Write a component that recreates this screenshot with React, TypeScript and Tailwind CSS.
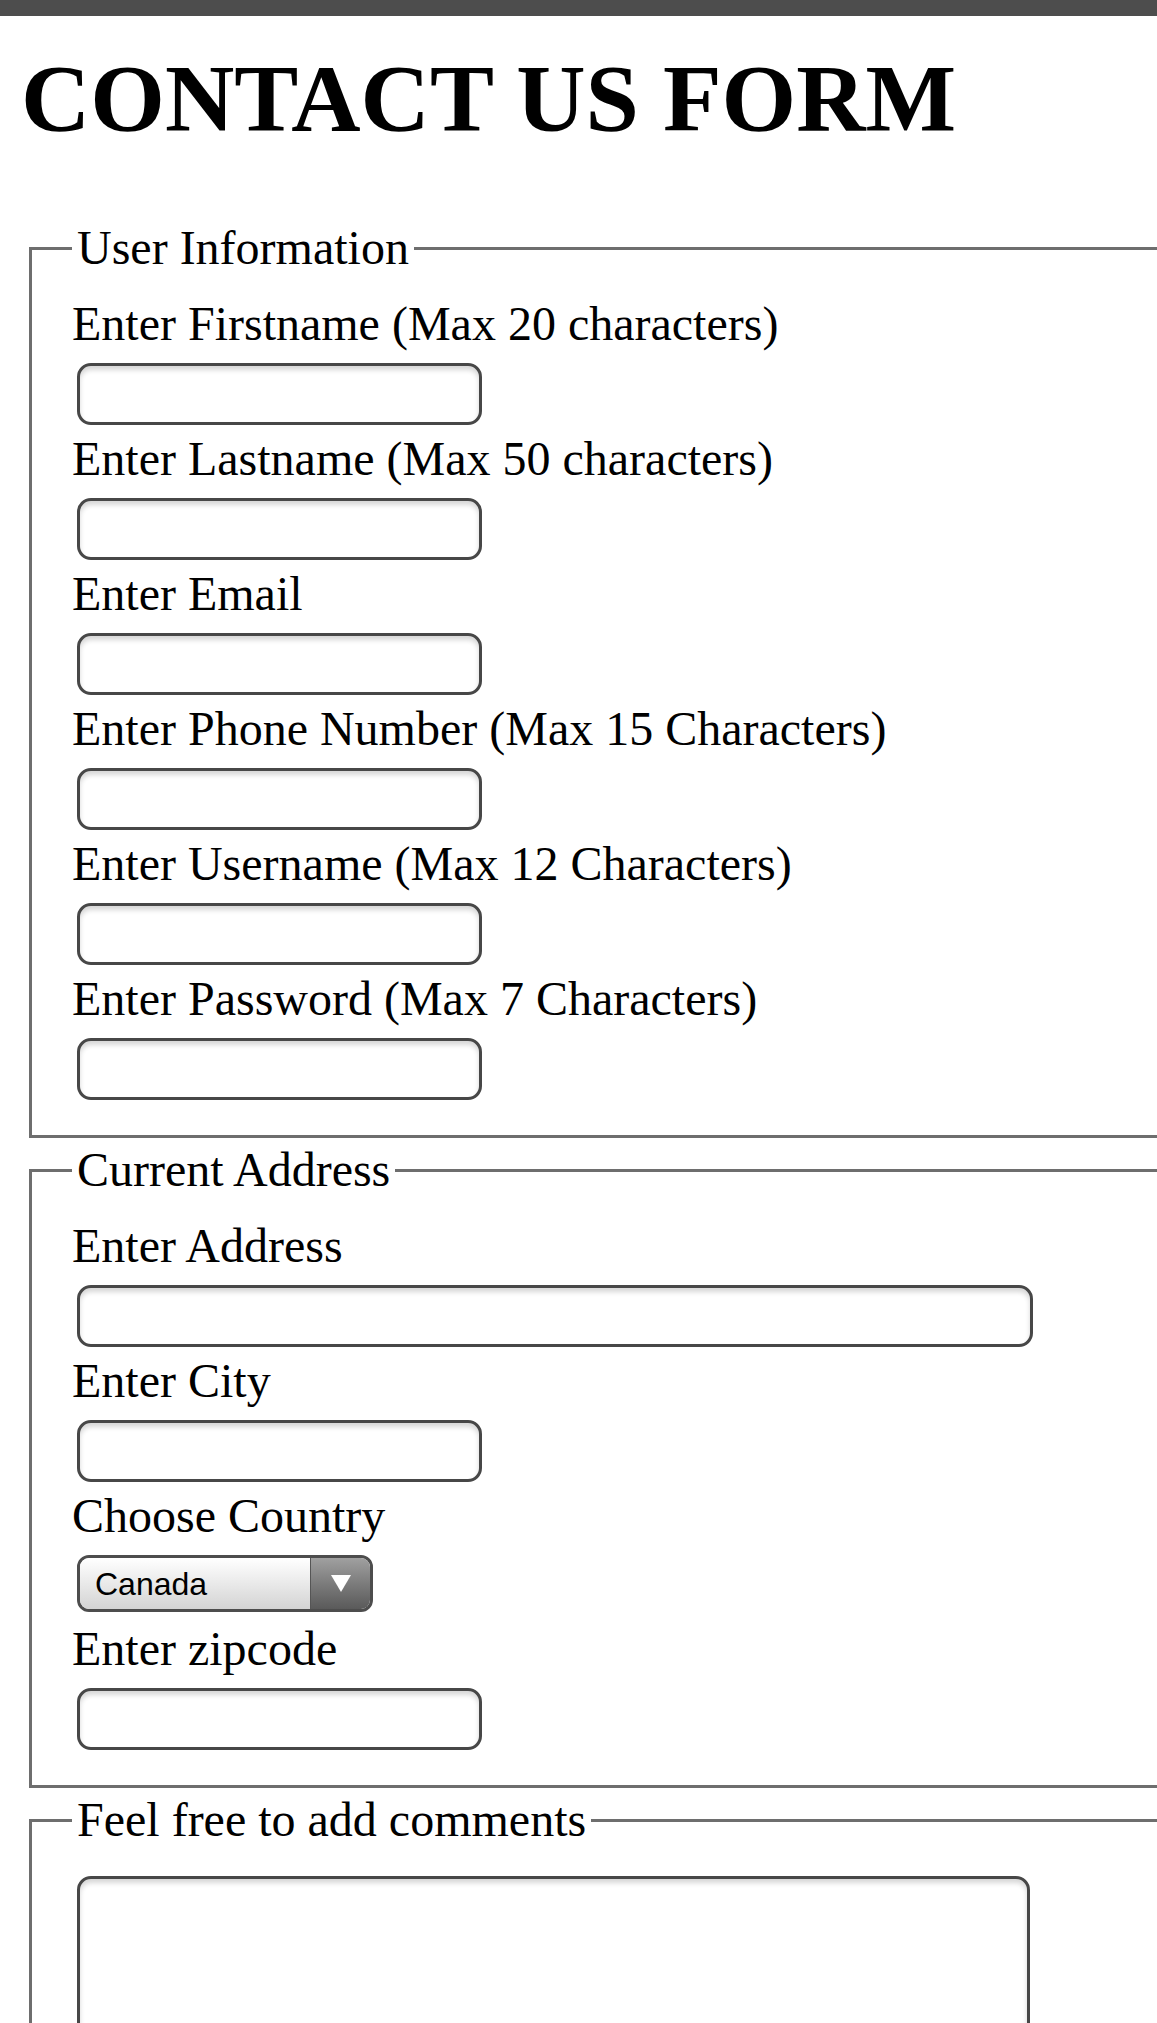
import React from 'react'

const userFields = [
  'Enter Firstname (Max 20 characters)',
  'Enter Lastname (Max 50 characters)',
  'Enter Email',
  'Enter Phone Number (Max 15 Characters)',
  'Enter Username (Max 12 Characters)',
  'Enter Password (Max 7 Characters)',
]

const inputClass =
  "ml-[5px] mt-[15px] h-[62px] rounded-[14px] border-[3px] border-[#474747] bg-white shadow-[inset_0_4px_5px_rgba(0,0,0,0.16)] outline-none"

function Field({ label, wide }: { label: string; wide?: boolean }) {
  return (
    <div className="flex flex-col items-start pb-[10px]">
      <label className="block leading-[48px]">{label}</label>
      <input type="text" className={`${inputClass} ${wide ? 'w-[956px]' : 'w-[405px]'}`} />
    </div>
  )
}

function Box({ title, top, children }: { title: string; top: string; children: React.ReactNode }) {
  return (
    <fieldset className={`ml-[29px] w-[1200px] border-[3px] border-[#6e6e6e] pl-[40px] pb-[25px] ${top}`}>
      <legend className="px-[5px] leading-[48px]">{title}</legend>
      {children}
    </fieldset>
  )
}

export default function App() {
  return (
    <div className="min-h-screen w-full overflow-hidden bg-white text-[48px] text-black font-['Liberation_Serif','Times_New_Roman',serif]">
      <div className="h-[16px] bg-[#4d4d4d]" />
      <h1 className="mt-[35px] pl-[21px] text-[96px] font-bold leading-[96px]">CONTACT US FORM</h1>

      <form className="mt-[77px] pb-[40px]">
        <Box title="User Information" top="">
          <div className="pt-[28px]">
            {userFields.map((f) => (
              <Field key={f} label={f} />
            ))}
          </div>
        </Box>

        <Box title="Current Address" top="mt-[8px]">
          <div className="pt-[28px]">
            <Field label="Enter Address" wide />
            <Field label="Enter City" />
            <div className="flex flex-col items-start">
              <label className="block leading-[48px]">Choose Country</label>
              <div className="ml-[5px] mt-[15px] mb-[13px] flex h-[57px] w-[296px] overflow-hidden rounded-[12px] border-[3px] border-[#4d4d4d]">
                <select
                  defaultValue="Canada"
                  className="min-w-0 flex-1 appearance-none bg-linear-to-b from-white to-[#d4d4d4] pl-[15px] text-[32px] leading-none text-black outline-none font-['Liberation_Sans','Arial',sans-serif]"
                >
                  <option>Canada</option>
                  <option>United States</option>
                  <option>Mexico</option>
                </select>
                <div className="flex w-[60px] items-center justify-center border-l border-[#555] bg-linear-to-b from-[#a0a0a0] to-[#5a5a5a]">
                  <svg width="22" height="19" viewBox="0 0 22 19">
                    <path d="M1 1 L21 1 L11 18 Z" fill="#fff" />
                  </svg>
                </div>
              </div>
            </div>
            <Field label="Enter zipcode" />
          </div>
        </Box>

        <Box title="Feel free to add comments" top="mt-[8px]">
          <div className="pt-[32px]">
            <textarea className="ml-[5px] block h-[300px] w-[953px] resize-none rounded-[14px] border-[3px] border-[#474747] bg-white shadow-[inset_0_4px_5px_rgba(0,0,0,0.16)] outline-none" />
          </div>
        </Box>
      </form>
    </div>
  )
}
